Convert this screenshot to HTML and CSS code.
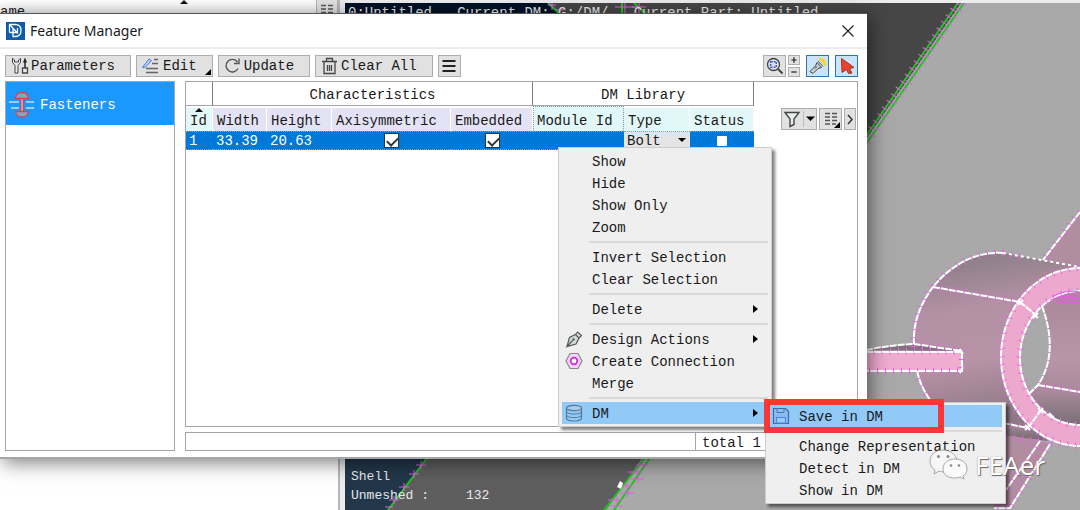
FILE: index.html
```html
<!DOCTYPE html>
<html lang="en">
<head>
<meta charset="utf-8">
<title>Feature Manager</title>
<link rel="stylesheet" href="styles.css">
</head>
<body>
<div class="desktop">
  <div class="app">
    <aside class="list-pane">
      <div class="list-head"><span class="list-name">ame</span><span class="sort-up"></span>
        <svg class="grid-button" viewBox="0 0 22 20"><rect x=".5" y="-2" width="21" height="22" fill="#e2e2e2" stroke="#b4b4b4"/><path d="M5 5.500h5M12 5.500h5M5 9h5M12 9h5M5 12.500h5M12 12.500h5" stroke="#555" stroke-width="1.500"/></svg>
      </div>
    </aside>
    <main class="viewport">
      <svg class="scene" viewBox="345 3 735 507" preserveAspectRatio="xMinYMin slice" aria-hidden="true">
        <defs>
          <linearGradient id="tube" x1="0" y1="0" x2="0.150" y2="1"><stop offset="0" stop-color="#807980"/><stop offset=".16" stop-color="#988591"/><stop offset=".35" stop-color="#b390a4"/><stop offset=".65" stop-color="#b893a8"/><stop offset="1" stop-color="#8d7985"/></linearGradient>
          <linearGradient id="bore" x1="0" y1="0" x2="0" y2="1"><stop offset="0" stop-color="#a88898"/><stop offset=".5" stop-color="#b994a9"/><stop offset=".75" stop-color="#a98a9b"/><stop offset="1" stop-color="#766f73"/></linearGradient>
          <linearGradient id="under" x1="0" y1="0" x2="0" y2="1"><stop offset="0" stop-color="#aa8c9b"/><stop offset="1" stop-color="#6e696c"/></linearGradient>
          <clipPath id="boreclip"><ellipse cx="1080" cy="358" rx="60" ry="67"/></clipPath>
        </defs>
        <rect x="345" y="3" width="735" height="507" fill="#a9a9a9"/>
        <path d="M345 3H961L606 510H345z" fill="#5e5e5e"/>
        <path d="M540 3H961L860 148H540z" fill="#464646"/>
        <path d="M345 459H426L388 510H345z" fill="#22374a"/>
        <path d="M345 3H548L560 14H345z" fill="#001126"/>
        <g class="edge">
          <path d="M548 3L560 14M622 3V14M634 3L646 14M958 3L864 139M964 3L864 147M427 458L388 510M645 458L604 510M650 458L614 510"/>
        </g>
        <g class="marks">
          <path class="tick" d="M958 3L864 139M964 3L864 147"/>
          <path d="M548 5h8m-4-3v8M556 10h8M615 7h20M625 3v10M632 7h14m-7-4v10M416 465h10m-5-4v8M409 474h10m-5-4v8M399 487h10m-5-4v8M389 500h10m-5-4v8M385 507h8M636 465h12m-5-4v8M628 472h14m-5-4v8M630 479h14m-6-4v8M618 486h14m-5-4v8M620 493h14m-6-4v8M608 500h14m-5-4v8M610 506h12"/>
        </g>
        <path d="M617 487l3-6 3 2-2 6z" fill="#fff"/>
        <path d="M1043 260L1080 212V267z" fill="#b08d9f"/>
        <path d="M1006 432L1050 444L1010 508H994z" fill="#b08d9f"/>
        <path d="M1003 423L1030 427L1048 441L1003 435z" fill="url(#under)"/>
        <path d="M1003 253C975 251 950 266 933 287C918 307 913 326 914 347C915 374 921 390 931 401L946 420L1030 428L1080 360V267z" fill="url(#tube)"/>
        <path d="M866 350C885 347 900 345 914 344C932 345 945 347 962 351z" fill="#81737b"/>
        <path d="M866 351H962V371H866z" fill="#f1add0"/>
        <ellipse cx="1080" cy="357" rx="79" ry="89" fill="#eda9cd"/>
        <ellipse cx="1080" cy="358" rx="60" ry="67" fill="url(#bore)"/>
        <path clip-path="url(#boreclip)" d="M1010 300L1042 306C1052 333 1054 361 1038 385L1028 396L1010 390z" fill="#a9a9a9"/>
        <g class="tick">
          <path d="M1080 212L1043 260M1003 253C975 251 950 266 933 287C918 307 913 326 914 347M917 371Q921 388 931 401M1003 253L1022 257M933 287L1020 302M866 351H962V371H866M914 344L962 351M1038 385L1080 392M1006 437L1046 442M1040 441L1006 490M1050 444L1010 508H994M1003 423L1028 428"/>
          <ellipse cx="1080" cy="357" rx="79" ry="89"/><ellipse cx="1080" cy="358" rx="60" ry="67"/>
        </g>
        <g class="outline">
          <path d="M1080 212L1043 260M1003 253C975 251 950 266 933 287C918 307 913 326 914 344M917 371Q921 388 931 401M1003 423L1028 428M933 287L1020 302L1036 315M1028 428L1041 410"/>
          <path d="M866 350Q890 345 914 344L962 351M866 352H962V371H866M1042 306C1052 333 1054 361 1038 385L1030 393M1038 385L1080 392M1040 441L1006 490M1050 444L1010 508H994"/>
          <path d="M1003 253L1080 267" stroke-dasharray="3 3"/>
          <ellipse cx="1080" cy="357" rx="79" ry="89"/><ellipse cx="1080" cy="358" rx="60" ry="67"/>
          <path d="M1018 300l5 5m0-5l-5 5M1033 313l5 5m0-5l-5 5M1025 425l5 5m0-5l-5 5M1038 408l5 5m0-5l-5 5M960 349l3 5m0 13l-3 6M1049 413l5 5"/>
        </g>
        <path class="marks" d="M1052 297Q1066 289 1080 292M1050 300Q1066 293 1080 299M1058 299H1080M1056 302H1080M1062 296V304M1068 293V304M1074 293V305"/>
      </svg>
      <p class="caption">0:Untitled &nbsp; Current DM: G:/DM/ &nbsp; Current Part: Untitled</p>
      <dl class="mesh-info"><dt>Shell</dt><dd></dd><dt>Unmeshed :</dt><dd>132</dd></dl>
    </main>
  </div>

  <section class="dialog" aria-label="Feature Manager">
    <header class="titlebar">
      <svg class="logo" viewBox="0 0 19 18"><rect width="19" height="18" fill="#0b5cab"/><path d="M3.500 10.500V2.500H10Q15 3 15 8.500T10 14.500H7V6M3.500 10.500H7M3.500 2.500L12 11.500M7 10.500H11.500V6" fill="none" stroke="#fff" stroke-width="1.300"/></svg>
      <h1>Feature Manager</h1>
      <button class="close" aria-label="Close"><svg viewBox="0 0 12 12"><path d="M.5.5l11 11M11.500.5l-11 11" stroke="#222" stroke-width="1.200"/></svg></button>
    </header>
    <div class="toolbar">
      <button class="tool"><svg viewBox="0 0 18 18"><path d="M1.500 1.500V5.500L4 8.500V16H7V8.500L9.500 5.500V1.500L7.500 3V5H3.500V3z" fill="#e8e8e8" stroke="#444"/><path d="M14 11V5" stroke="#222" stroke-width="1.500"/><path d="M14 .5L16 5.500H12z" fill="#222"/><path d="M11.500 11h5v5h-5z" fill="#e8e8e8" stroke="#444" stroke-width="1.300"/></svg>Parameters</button>
      <button class="tool corner edit"><svg viewBox="0 0 18 18"><path d="M1 9.500L7 2L9.500 3.500L3.500 10L.8 10.800z" fill="#b9d0f5" stroke="#4878dc"/><path d="M12 2.500H16M10 6.500H16M4 11.500H16M4 15.500H16" stroke="#666" stroke-width="1.500"/></svg>Edit</button>
      <button class="tool"><svg viewBox="0 0 18 18"><path d="M14 11.500A6.300 6.300 0 1 1 13.500 5M15 1.500V6.500H10" fill="none" stroke="#555" stroke-width="1.400"/></svg>Update</button>
      <button class="tool"><svg viewBox="0 0 18 18"><path d="M1 4.500H16M5.500 4V1.500h6V4M3 4.500V16.500H14V4.500M6.500 8v6M8.500 8v6M10.500 8v6" fill="none" stroke="#444" stroke-width="1.300"/></svg>Clear All</button>
      <button class="square" aria-label="Menu"><svg viewBox="0 0 18 18"><path d="M2.500 4h13M2.500 9h13M2.500 14h13" stroke="#222" stroke-width="2"/></svg></button>
      <div class="toolbar-end">
        <button class="square" aria-label="Zoom to fit"><svg viewBox="0 0 18 18"><circle cx="7.500" cy="7.500" r="6" fill="none" stroke="#444" stroke-width="1.300"/><path d="M12 12l4.500 4.500" stroke="#444" stroke-width="2"/><rect x="4.700" y="4.700" width="5.600" height="5.600" fill="none" stroke="#3c64e0" stroke-width="1.500" stroke-dasharray="2 1"/></svg></button>
        <div class="stepper"><button aria-label="Increase"><svg viewBox="0 0 10 9"><path d="M2 4.500h6M5 1.500v6" stroke="#222" stroke-width="1.400"/></svg></button><button aria-label="Decrease"><svg viewBox="0 0 10 9"><path d="M2 4.500h6" stroke="#222" stroke-width="1.400"/></svg></button></div>
        <button class="square on" aria-label="Highlight"><svg viewBox="0 0 18 18"><path d="M10 1Q17 0 17.500 9L14.500 8Q14 4 10 3.500z" fill="#f9d71e"/><path d="M8 5.500L12.500 10.500L9 11.500L4 16.500L1 14.500L6.500 9zM9 4l5 5.500" fill="#c9d3da" stroke="#444"/><path d="M6 11.500l2-2" stroke="#333"/></svg></button>
        <button class="square on" aria-label="Select"><svg viewBox="0 0 18 18"><path d="M3.500 1.500L16 10.500L11.500 11.500L14 16L10.500 16.500L8.500 12.500L4 15.500z" fill="#e8432d" stroke="#a33226"/></svg></button>
      </div>
    </div>
    <div class="dialog-body">
      <nav class="side">
        <button class="side-item"><svg viewBox="0 0 26 28"><path d="M0 11h10M17 11h8M2 17h8M17 17h8" stroke="#bfe3ff" stroke-width="1.300"/><path d="M11.500 7h3v14h-3z" fill="#9db6dc"/><path d="M6.500 7.500Q6.500 1.500 13 1.500T19.500 7.500zM6.500 20.500H19.500Q18.500 26 13 26T6.500 20.500z" fill="#8ba2c4" stroke="#d9443f" stroke-width="1.300"/><path d="M11.500 8v12M14.500 8v12" stroke="#e04a45" stroke-width="1.300"/></svg>Fasteners</button>
      </nav>
      <div class="content">
        <div class="table-box">
          <table class="features">
            <colgroup><col class="c-id"><col class="c-width"><col class="c-height"><col class="c-axis"><col class="c-emb"><col class="c-module"><col class="c-type"><col class="c-status"></colgroup>
            <thead>
              <tr class="groups"><th></th><th colspan="4">Characteristics</th><th colspan="3">DM Library</th></tr>
              <tr class="names"><th class="mint sorted">Id</th><th>Width</th><th>Height</th><th>Axisymmetric</th><th>Embedded</th><th class="mint current">Module Id</th><th class="mint">Type</th><th class="mint">Status</th></tr>
            </thead>
            <tbody>
              <tr><td>1</td><td>33.39</td><td>20.63</td><td class="mid"><input class="check" type="checkbox" checked aria-label="Axisymmetric"></td><td class="mid"><input class="check" type="checkbox" checked aria-label="Embedded"></td><td></td><td class="pick"><div class="select-wrap"><select aria-label="Type"><option>Bolt</option></select></div></td><td class="mid"><input class="check plain" type="checkbox" aria-label="Status"></td></tr>
            </tbody>
          </table>
          <div class="filters">
            <button class="filter" aria-label="Filter"><svg viewBox="0 0 34 20"><path d="M3 3.500H17L12 10V15.500L8 17.500V10z" fill="#e8edf0" stroke="#444" stroke-width="1.400"/><path d="M21.500 2V18" stroke="#bbb"/><path d="M24 7.500h9L28.500 12z" fill="#000"/></svg></button>
            <button class="square corner" aria-label="Columns"><svg viewBox="0 0 18 18"><path d="M3 3.500h5M10 3.500h5M3 7h5M10 7h5M3 10.500h5M10 10.500h5M3 14h5M10 14h4" stroke="#555" stroke-width="1.500"/></svg></button>
            <button class="more" aria-label="More"><svg viewBox="0 0 10 18"><path d="M3 5l4 4.500L3 14" fill="none" stroke="#333" stroke-width="1.500"/></svg></button>
          </div>
        </div>
        <footer class="status"><span>total 1</span></footer>
      </div>
    </div>
  </section>

  <div class="menu context" role="menu">
    <button role="menuitem">Show</button>
    <button role="menuitem">Hide</button>
    <button role="menuitem">Show Only</button>
    <button role="menuitem">Zoom</button>
    <hr>
    <button role="menuitem">Invert Selection</button>
    <button role="menuitem">Clear Selection</button>
    <hr>
    <button role="menuitem" class="parent">Delete</button>
    <hr>
    <button role="menuitem" class="parent"><svg viewBox="0 0 18 18"><path d="M2 16.500L4.500 7.500L10.500 4.500L14 8L11 14L2 16.500L7.500 10.500M10.500 4.500L12.500 2L16.500 5.500L14 8" fill="#d5dadd" stroke="#555" stroke-width="1.200"/><circle cx="8.500" cy="9.500" r="1.200" fill="#555"/></svg>Design Actions</button>
    <button role="menuitem"><svg viewBox="0 0 18 18"><path d="M5 1.500H13L17 9L13 16.500H5L1 9z" fill="#f0d6f5" stroke="#8d8492" stroke-width="1.200"/><circle cx="9" cy="9" r="3.300" fill="#fff" stroke="#d62be6" stroke-width="1.800"/></svg>Create Connection</button>
    <button role="menuitem">Merge</button>
    <hr>
    <button role="menuitem" class="parent active"><svg viewBox="0 0 18 18"><path d="M1.500 4V14Q1.500 17 9 17T16.500 14V4" fill="none" stroke="#567a99" stroke-width="1.200"/><ellipse cx="9" cy="4" rx="7.500" ry="2.700" fill="#a8cdec" stroke="#567a99" stroke-width="1.200"/><path d="M1.500 7.500Q2 10 9 10T16.500 7.500M1.500 11Q2 13.500 9 13.500T16.500 11" fill="none" stroke="#567a99" stroke-width="1.200"/></svg>DM</button>
  </div>

  <div class="menu submenu" role="menu">
    <button role="menuitem" class="active"><svg viewBox="0 0 18 18"><path d="M1.500 1.500H13.500L16.500 4.500V16.500H1.500z" fill="#8bbcee" stroke="#3f68a8" stroke-width="1.200"/><path d="M5 1.500V5.500H12V1.500" fill="none" stroke="#4a74b4"/><path d="M4.500 16V10.500H13.500V16z" fill="#9ccaff" stroke="#4a86e6" stroke-width="1.200"/></svg>Save in DM</button>
    <hr>
    <button role="menuitem">Change Representation</button>
    <button role="menuitem">Detect in DM</button>
    <button role="menuitem">Show in DM</button>
    <div class="callout"></div>
  </div>

  <div class="watermark">
    <svg viewBox="0 0 40 32"><path d="M14 1C6 1 1 6 1 12c0 4 2 7 5 9l-1 4 5-3q2 1 6 1C25 22 28 17 28 12S22 1 14 1z" fill="#f6f6f6" stroke="#888" stroke-width=".7"/><path d="M26 10c-7 0-12 4-12 10s5 9 12 9q3 0 5-1l4 2-1-3c3-2 4-4 4-7 0-6-5-10-12-10z" fill="#fafafa" stroke="#888" stroke-width=".7"/><g fill="#888"><circle cx="9.500" cy="7.500" r="1.500"/><circle cx="19" cy="7.500" r="1.500"/><circle cx="22" cy="16.500" r="1.300"/><circle cx="30" cy="16.500" r="1.300"/></g></svg>
    <span>FEAer</span>
  </div>
</div>
</body>
</html>
```

FILE: styles.css
```css
* { box-sizing: border-box; }
body {
  margin: 0;
  font: 14px/22px "Liberation Mono", monospace;
  color: #1a1a1a;
}
button, select { font: inherit; color: inherit; }
button { padding: 0; border: 0; background: none; text-align: left; }
svg { display: block; flex: none; }

.desktop { position: relative; height: 100vh; min-height: 500px; overflow: hidden; background: #fff; }

/* Main application behind the dialog */
.app { display: flex; height: 100%; padding-top: 3px; background: #ececec; }
.list-pane { width: 340px; flex: none; margin-top: -3px; background: #fff; border-right: 2px solid #b5b7bd; }
.list-head { display: flex; background: linear-gradient(#fff, #e2e2e2); }
.list-name { width: 180px; line-height: 24px; }
.sort-up { height: 4px; border: 4px solid transparent; border-top: 0; border-bottom: 4px solid #111; }
.grid-button { width: 22px; height: 20px; margin-left: auto; }
.viewport {
  position: relative;
  flex: 1;
  display: flex;
  flex-direction: column;
  justify-content: space-between;
  margin-left: 5px;
  overflow: hidden;
  color: #e8e8e8;
}
.scene { position: absolute; top: 0; left: 0; width: 100%; height: 100%; }
.caption { position: relative; margin: 0; padding-left: 3px; white-space: pre; line-height: 20px; }
.mesh-info {
  position: relative;
  display: grid;
  grid-template-columns: 115px auto;
  margin: 0;
  padding: 0 0 5px 6px;
  font-size: 13px;
  line-height: 19px;
}
.mesh-info dd { margin: 0; }
.edge { fill: none; stroke: #1fc41f; stroke-width: 2; }
.marks { fill: none; stroke: #e65ae6; stroke-width: 1; }
.tick { fill: none; stroke: #ee5cf0; stroke-width: 7; stroke-dasharray: 1 7; }
.outline { fill: none; stroke: #fff; stroke-width: 2; stroke-dasharray: 7 1; }

/* Dialog window */
.dialog {
  position: absolute;
  top: 13px;
  bottom: 51px;
  left: 0;
  width: calc(100% - 213px);
  display: flex;
  flex-direction: column;
  background: #fff;
  border-top: 1px solid #555;
  border-bottom: 2px solid #a5a5a5;
  box-shadow: 3px 4px 18px rgba(0, 0, 0, .5);
}
.titlebar { display: flex; align-items: center; gap: 5px; height: 35px; padding: 0 13px 0 6px; border-bottom: 2px solid #ececec; }
.logo { width: 19px; height: 18px; }
h1 { flex: 1; margin: 0; font: 14px/20px "Noto Sans", sans-serif; }
.close { width: 12px; }
.toolbar { display: flex; gap: 5px; padding: 6px 9px 4px 5px; }
.tool, .square, .filter, .more, .stepper button { background: #e1e1e1; border: 1px solid #adadad; }
.tool { display: flex; align-items: center; gap: 2px; height: 22px; padding: 0 15px 0 5px; line-height: 22px; white-space: nowrap; }
.tool svg { width: 18px; height: 18px; }
.tool.edit { gap: 3px; padding-right: 15px; }
.square { display: grid; place-items: center; width: 23px; height: 22px; }
.square svg { width: 18px; height: 18px; }
.corner { position: relative; }
.corner::after {
  content: "";
  position: absolute;
  right: 1px;
  bottom: 1px;
  border: 3px solid #000;
  border-top-color: transparent;
  border-left-color: transparent;
}
.on { background: #cce4f7; border-color: #2a74b8; }
.toolbar-end { display: flex; gap: 6px; margin-left: auto; }
.toolbar-end .stepper { margin-left: -4px; }
.stepper { display: flex; flex-direction: column; gap: 2px; }
.stepper button { display: grid; place-items: center; width: 12px; height: 10px; }
.stepper svg { width: 10px; height: 8px; }

.dialog-body { flex: 1; min-height: 0; display: flex; gap: 10px; padding: 0 9px 6px 5px; }
.side { width: 170px; flex: none; border: 1px solid #a3a5ab; }
.side-item { display: flex; align-items: center; gap: 5px; width: 100%; height: 43px; padding: 2px 0 0 3px; color: #fff; background: #1a98ff; }
.side-item svg { width: 26px; height: 28px; }
.content { flex: 1; min-width: 0; display: flex; flex-direction: column; gap: 5px; }
.table-box { flex: 1; display: flex; justify-content: space-between; border: 1px solid #a3a5ab; }
.features { width: 568px; flex: none; align-self: flex-start; table-layout: fixed; border-collapse: separate; border-spacing: 0; }
.c-id { width: 27px; }
.c-width { width: 54px; }
.c-height { width: 65px; }
.c-axis { width: 119px; }
.c-emb { width: 82px; }
.c-module { width: 91px; }
.c-type { width: 66px; }
.c-status { width: 64px; }
.features th { padding: 2px 0 0; font-weight: normal; white-space: nowrap; }
.groups th { height: 24px; line-height: 20px; border-right: 1px solid #777b88; border-bottom: 1px solid #a3a5ab; }
.names th { height: 25px; padding-left: 4px; line-height: 20px; text-align: left; background: #e4e3f6; border-top: 2px solid #fff; border-right: 1px solid #fff; }
.names .mint { background: #e2f7f7; }
.names .current { padding: 3px 0 0 3px; border: 1px dotted #8a9a9a; border-bottom: 0; }
.names .sorted { position: relative; }
.sorted::after { content: ""; position: absolute; top: 0; left: 9px; border: 4px solid transparent; border-top: 0; border-bottom-color: #111; }
.features td { height: 19px; padding: 2px 0 0 3px; line-height: 15px; color: #fff; background: #0078d7; border-top: 1px dotted #e09040; border-bottom: 1px dotted #e09040; }
.features td.mid { padding: 0; text-align: center; }
.features td.pick { padding: 0; background: #e4e4e4; color: #1a1a1a; }
.check { appearance: none; position: relative; display: block; width: 15px; height: 15px; margin: 0 auto; background: #fff; border: 1px solid #333; }
.check:checked::before {
  content: "";
  position: absolute;
  top: 3px;
  left: 2px;
  width: 9px;
  height: 5px;
  border: 1px solid #333;
  border-width: 0 0 2px 2px;
  transform: rotate(-45deg);
}
.plain { width: 10px; height: 10px; border: 0; border-radius: 1px; }
.select-wrap { position: relative; }
.select-wrap::after { content: ""; position: absolute; top: 6px; right: 4px; border: 4px solid transparent; border-bottom: 0; border-top-color: #000; }
select { display: block; appearance: none; width: 100%; height: 17px; padding: 2px 0 0 3px; line-height: 15px; border: 0; background: none; }
.filters { display: flex; gap: 2px; align-self: flex-start; padding: 26px 1px 0 0; }
.filter { width: 36px; height: 22px; }
.more { width: 12px; height: 22px; }
.status { display: flex; justify-content: flex-end; height: 19px; border: 1px solid #a3a5ab; }
.status span { width: 162px; padding-left: 6px; line-height: 20px; border-left: 1px solid #a3a5ab; }

/* Popup menus */
.menu {
  position: absolute;
  display: flex;
  flex-direction: column;
  padding: 2px 3px;
  background: #efefef;
  border: 1px solid #ccc;
  box-shadow: 3px 3px 3px rgba(0, 0, 0, .5);
}
.menu button { position: relative; display: flex; align-items: center; height: 22px; padding: 2px 0 0 30px; white-space: nowrap; }
.menu svg { position: absolute; top: 2px; left: 3px; width: 18px; height: 18px; }
.menu hr { width: calc(100% - 27px); height: 2px; margin: 3px 0 3px 27px; border: 0; background: #d9d9d9; }
.menu .active { background: #91c9f7; }
.parent::after { content: ""; position: absolute; top: 7px; right: 10px; border: 4px solid transparent; border-right: 0; border-left: 5px solid #000; }
.context { top: 147px; left: 558px; width: 214px; }
.submenu { top: 402px; left: 765px; width: 241px; }
.callout { position: absolute; top: -4px; left: -2px; width: 180px; height: 34px; border: 6px solid #fb3636; }

.watermark {
  position: absolute;
  top: 448px;
  left: 929px;
  display: flex;
  align-items: center;
  gap: 6px;
  font: 26px/34px "Noto Sans", sans-serif;
  color: #fff;
  text-shadow: 1px 1px 1px #666, 0 0 1px #777;
}
.watermark svg { width: 40px; height: 32px; }
```
